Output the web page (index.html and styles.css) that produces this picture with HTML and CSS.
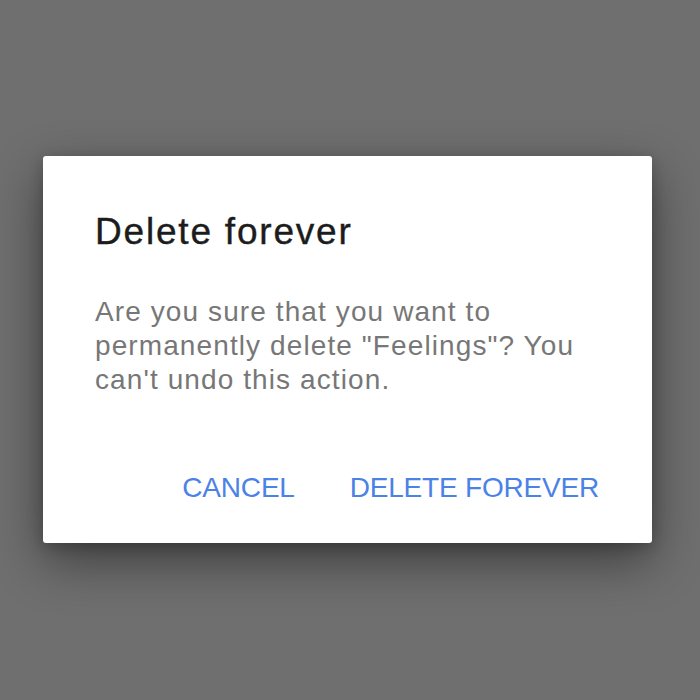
FILE: index.html
```html
<!DOCTYPE html>
<html lang="en">
<head>
    <meta charset="UTF-8">
    <meta name="viewport" content="width=device-width, initial-scale=1.0">
    <title>Delete forever</title>
    <link rel="stylesheet" href="styles.css">
</head>
<body>
    <div class="dialog">
        <h1 class="dialog-title">Delete forever</h1>
        <p class="dialog-text">Are you sure that you want to permanently delete "Feelings"? You can't undo this action.</p>
        <div class="dialog-actions">
            <button class="action">CANCEL</button>
            <button class="action">DELETE FOREVER</button>
        </div>
    </div>
</body>
</html>
```

FILE: styles.css
```css
html, body {
    margin: 0;
    height: 100%;
}
body {
    font-family: "Liberation Sans", Arial, sans-serif;
    background-color: #6f6f6f;
    padding-top: 156px;
    padding-left: 43px;
    box-sizing: border-box;
}
.dialog {
    width: 609px;
    height: 387px;
    box-sizing: border-box;
    background-color: #fff;
    border-radius: 3px;
    padding: 54px 53px 0 52px;
    box-shadow: 0 18px 50px rgba(0,0,0,0.45), 0 4px 14px rgba(0,0,0,0.2);
}
.dialog-title {
    margin: 0;
    font-size: 37px;
    line-height: 44px;
    font-weight: normal;
    letter-spacing: 1.8px;
    color: #1c1c1c;
    -webkit-text-stroke: 0.4px #1c1c1c;
}
.dialog-text {
    margin: 41px 0 0;
    font-size: 28px;
    line-height: 34px;
    letter-spacing: 1.1px;
    color: #777;
}
.dialog-actions {
    display: flex;
    justify-content: flex-end;
    gap: 55px;
    margin-top: 75px;
}
.action {
    border: none;
    background: none;
    padding: 0;
    font-family: inherit;
    font-size: 28px;
    line-height: 32px;
    letter-spacing: -0.2px;
    color: #4b82e6;
    cursor: pointer;
}
```
